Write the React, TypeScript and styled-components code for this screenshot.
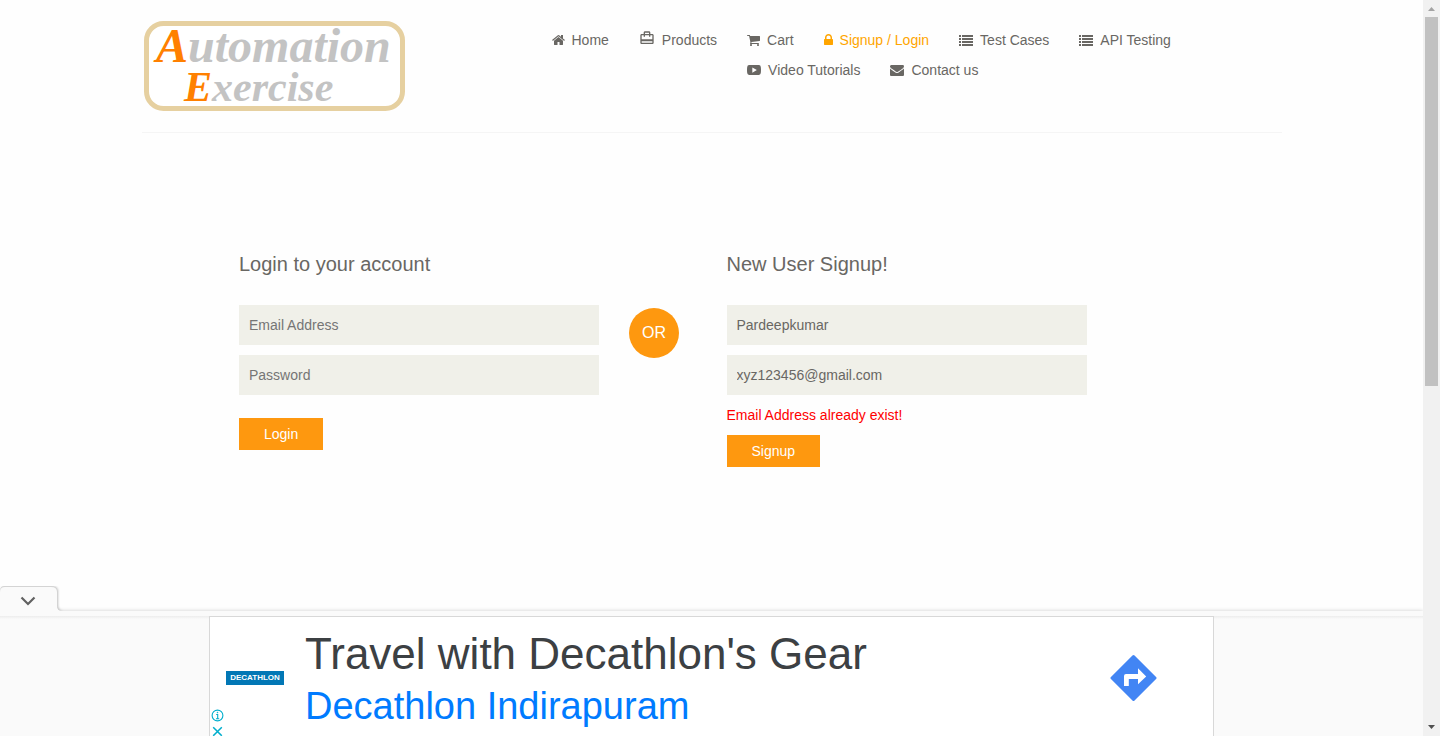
import React, { useState } from "react";
import styled, { createGlobalStyle } from "styled-components";
import { MdCardTravel } from "react-icons/md";

const GlobalStyle = createGlobalStyle`
  *, *::before, *::after { box-sizing: border-box; }
  body {
    margin: 0;
    background: #fefefe;
    color: #696763;
    font: 14px/20px "Liberation Sans", Arial, sans-serif;
  }
`;

const Viewport = styled.div`
  display: flex;
  height: 100vh;
  overflow: hidden;
`;

const Page = styled.div`
  flex: 1;
  min-width: 0;
  display: flex;
  flex-direction: column;
  overflow: hidden;
`;

const Content = styled.div`
  flex: 1;
  min-height: 0;
  overflow: hidden;
`;

const Container = styled.div`
  max-width: 1170px;
  margin: 0 auto;
  padding: 0 15px;
`;

/* Header */

const HeaderRow = styled.header`
  display: flex;
  align-items: flex-start;
  padding: 20px 0;
  border-bottom: 1px solid #f5f5f5;
`;

const LogoLink = styled.a`
  flex: 0 0 410px;
  display: flex;
`;

const Nav = styled.nav`
  flex: 1;
  display: flex;
  gap: 30px;
  padding-top: 10px;
`;

const NavList = styled.ul<{ $wrap?: boolean }>`
  display: flex;
  flex-wrap: ${(p) => (p.$wrap ? "wrap" : "nowrap")};
  align-content: flex-start;
  gap: 10px 30px;
  margin: 0;
  padding: 0;
  list-style: none;
`;

const NavLink = styled.a<{ $active?: boolean }>`
  display: flex;
  align-items: center;
  gap: 7px;
  color: ${(p) => (p.$active ? "orange" : "#696763")};
  text-decoration: none;
  white-space: nowrap;

  svg { display: block; flex: none; }
`;

const RaisedIcon = styled.span`
  padding-bottom: 4px;
`;

/* Forms */

const FormGrid = styled.main`
  display: grid;
  grid-template-columns: repeat(12, 1fr);
  margin: 0 -15px;
  padding-top: 120px;
`;

const Column = styled.section<{ $start: number; $span: number }>`
  grid-column: ${(p) => p.$start} / span ${(p) => p.$span};
  padding: 0 15px;
`;

const Title = styled.h2`
  margin: 0 0 30px;
  font-size: 20px;
  line-height: 22px;
  font-weight: 400;
`;

const Field = styled.input`
  display: block;
  width: 100%;
  height: 40px;
  margin-bottom: 10px;
  padding: 0 10px;
  border: 0;
  border-radius: 0;
  outline: none;
  background: #f0f0e9;
  color: #696763;
  font: inherit;

  &::placeholder { color: #757575; opacity: 1; }
`;

const ErrorText = styled.p`
  margin: 0 0 10px;
  color: #ff0000;
`;

const SubmitButton = styled.button<{ $spaced?: boolean }>`
  display: block;
  height: 32px;
  margin-top: ${(p) => (p.$spaced ? "23px" : "0")};
  padding: 0 25px;
  border: 0;
  background: #fe980f;
  color: #fff;
  font: inherit;
  cursor: pointer;
`;

const OrBadge = styled.h2`
  width: 50px;
  height: 50px;
  margin: 55px 0 0;
  border-radius: 50%;
  background: #fe980f;
  color: #fff;
  font-size: 16px;
  line-height: 50px;
  font-weight: 400;
  text-align: center;
`;

/* Anchored advertisement */

const AdPanel = styled.aside`
  flex: none;
  position: relative;
  padding-top: 5px;
  background: #fafafa;
  box-shadow: 0 0 4px rgba(0, 0, 0, 0.2);
`;

const CollapseButton = styled.button`
  position: absolute;
  left: 0;
  bottom: 100%;
  padding: 0;
  border: 0;
  background: none;
  overflow: hidden;
  cursor: pointer;

  svg {
    display: block;
    filter: drop-shadow(1px 0 1px rgba(0, 0, 0, 0.25));
  }
`;

const AdStage = styled.div`
  height: 120px;
  padding: 0 208px;
  overflow: hidden;
  background: linear-gradient(#ececec, #fafafa 3px);
`;

const AdCard = styled.div`
  position: relative;
  display: flex;
  align-items: center;
  max-width: 1005px;
  height: 124px;
  margin: 0 auto;
  padding: 0 56px 0 16px;
  border: 1px solid #d8d8d8;
  background: #fff;
`;

const BrandMark = styled.span`
  width: 58px;
  height: 14px;
  background: #0277b5;
  color: #fff;
  font: bold 8px/14px "Liberation Sans", Arial, sans-serif;
  text-align: center;
`;

const AdCopy = styled.div`
  flex: 1;
  padding: 4px 0 0 21px;
  white-space: nowrap;
`;

const AdHeadline = styled.div`
  color: #3c4043;
  font-size: 44px;
  line-height: 52px;
`;

const AdLink = styled.a`
  display: block;
  color: #007bff;
  font-size: 38px;
  line-height: 52px;
  text-decoration: none;
`;

const AdDirections = styled.a`
  display: flex;
  color: #4285f4;
`;

const AdControls = styled.div`
  position: absolute;
  left: 1px;
  top: 92px;
  display: flex;
  flex-direction: column;
  gap: 3px;

  button {
    display: block;
    padding: 0;
    border: 0;
    background: none;
    cursor: pointer;
  }

  svg { display: block; }
`;

/* Scrollbar */

const ScrollTrack = styled.div`
  flex: 0 0 17px;
  display: flex;
  flex-direction: column;
  padding: 0 2px;
  background: #f1f1f1;
`;

const ScrollArrow = styled.svg`
  flex: none;
  display: block;
  width: 13px;
  height: 17px;
`;

const ScrollThumb = styled.div`
  flex: 369;
  background: #c1c1c1;
`;

const ScrollRest = styled.div`
  flex: 333;
`;

type GlyphProps = { left: number; width: number; d: string };

/* Icons on a 1792-unit em square, cropped to their own advance width. */
const Glyph = ({ left, width, d }: GlyphProps) => (
  <svg
    width={width}
    height="14"
    viewBox={`${left} 0 ${width * 128} 1792`}
    fill="currentColor"
    fillRule="evenodd"
    aria-hidden="true"
  >
    <path d={d} />
  </svg>
);

const HomeIcon = () => (
  <Glyph
    left={64}
    width={13}
    d="M1472 992v480q0 26-19 45t-45 19h-384v-384h-256v384h-384q-26 0-45-19t-19-45v-480q0-1 .5-3t.5-3l575-474 575 474q1 2 1 6zm223-69l-62 74q-8 9-21 11h-3q-13 0-21-7l-692-577-692 577q-12 8-24 7-13-2-21-11l-62-74q-8-10-7-23.5t11-21.5l719-599q32-26 76-26t76 26l244 204v-195q0-14 9-23t23-9h192q14 0 23 9t9 23v408l219 182q10 8 11 21.5t-7 23.5z"
  />
);

const CartIcon = () => (
  <Glyph
    left={64}
    width={13}
    d="M704 1536q0 52-38 90t-90 38-90-38-38-90 38-90 90-38 90 38 38 90zm896 0q0 52-38 90t-90 38-90-38-38-90 38-90 90-38 90 38 38 90zm128-1088v512q0 24-16.5 42.5t-40.5 21.5l-1044 122q13 60 13 70 0 16-24 64h920q26 0 45 19t19 45-19 45-45 19h-1024q-26 0-45-19t-19-45q0-11 8-31.5t16-36 21.5-40 15.5-29.5l-177-823h-204q-26 0-45-19t-19-45 19-45 45-19h256q16 0 28.5 6.5t19.5 15.5 13 24.5 8 26 5.5 29.5 4.5 26h1201q26 0 45 19t19 45z"
  />
);

const LockIcon = () => (
  <Glyph
    left={320}
    width={9}
    d="M640 768h512v-192q0-106-75-181t-181-75-181 75-75 181v192zm832 96v576q0 40-28 68t-68 28h-960q-40 0-68-28t-28-68v-576q0-40 28-68t68-28h32v-192q0-184 132-316t316-132 316 132 132 316v192h32q40 0 68 28t28 68z"
  />
);

const ListIcon = () => (
  <Glyph
    left={0}
    width={14}
    d="M0 256h256v256H0zM384 256h1408v256H384zM0 640h256v256H0zM384 640h1408v256H384zM0 1024h256v256H0zM384 1024h1408v256H384zM0 1408h256v256H0zM384 1408h1408v256H384z"
  />
);

const VideoIcon = () => (
  <Glyph
    left={0}
    width={14}
    d="M260 270Q896 226 1532 270Q1740 290 1766 500Q1818 896 1766 1292Q1740 1502 1532 1522Q896 1566 260 1522Q52 1502 26 1292Q-26 896 26 500Q52 290 260 270zM680 560V1240L1260 900z"
  />
);

const EnvelopeIcon = () => (
  <Glyph
    left={0}
    width={14}
    d="M1792 710v794q0 66-47 113t-113 47h-1472q-66 0-113-47t-47-113v-794q44 49 101 87 362 246 497 345 57 42 92.5 65.5t94.5 48 110 24.5h2q51 0 110-24.5t94.5-48 92.5-65.5q170-123 498-345 57-39 100-87zm0-294q0 79-49 151t-122 123q-376 261-468 325-10 7-42.5 31t-54 38-52 32.5-57.5 27-50 9h-2q-23 0-50-9t-57.5-27-52-32.5-54-38-42.5-31q-91-64-262-182.5t-205-142.5q-62-42-117-115.5t-55-136.5q0-78 41.5-130t118.5-52h1472q65 0 112.5 47t47.5 113z"
  />
);

const DirectionsIcon = () => (
  <svg width="48" height="48" viewBox="0 0 48 48" aria-hidden="true">
    <path
      d="M24.500 2.500L46 24L24.500 45.500L3 24Z"
      fill="currentColor"
      stroke="currentColor"
      strokeWidth="3"
      strokeLinejoin="round"
    />
    <path d="M15 32V22Q15 20 17 20H29V14.300L37.200 22.400L29 30.200V25H19.800V32Z" fill="#fff" />
  </svg>
);

const Logo = () => (
  <svg width="264" height="92" viewBox="0 0 264 92" role="img" aria-label="Automation Exercise">
    <rect x="4.500" y="3.500" width="256" height="85" rx="17" fill="#fff" stroke="#e6d0a0" strokeWidth="5" />
    <g fontFamily="Liberation Serif, Times New Roman, serif" fontStyle="italic" fontWeight="700" fill="#c3c3c3">
      <text x="14" y="42" fontSize="48">
        <tspan fill="#ff8000">A</tspan>utomation
      </text>
      <text x="42" y="81" fontSize="42">
        <tspan fill="#ff8000">E</tspan>xercise
      </text>
    </g>
  </svg>
);

type LinkItem = { label: string; icon: React.ReactNode; active?: boolean };

const primaryLinks: LinkItem[] = [
  { label: "Home", icon: <HomeIcon /> },
  {
    label: "Products",
    icon: (
      <RaisedIcon>
        <MdCardTravel size={16} />
      </RaisedIcon>
    ),
  },
];

const secondaryLinks: LinkItem[] = [
  { label: "Cart", icon: <CartIcon /> },
  { label: "Signup / Login", icon: <LockIcon />, active: true },
  { label: "Test Cases", icon: <ListIcon /> },
  { label: "API Testing", icon: <ListIcon /> },
  { label: "Video Tutorials", icon: <VideoIcon /> },
  { label: "Contact us", icon: <EnvelopeIcon /> },
];

const Links = ({ items, wrap }: { items: LinkItem[]; wrap?: boolean }) => (
  <NavList $wrap={wrap}>
    {items.map(({ label, icon, active }) => (
      <li key={label}>
        <NavLink href="#" $active={active}>
          {icon}
          {label}
        </NavLink>
      </li>
    ))}
  </NavList>
);

export default function App() {
  const [name, setName] = useState("Pardeepkumar");
  const [email, setEmail] = useState("xyz123456@gmail.com");
  const stay = (e: React.FormEvent) => e.preventDefault();

  return (
    <>
      <GlobalStyle />
      <Viewport>
        <Page>
          <Content>
            <Container>
              <HeaderRow>
                <LogoLink href="#">
                  <Logo />
                </LogoLink>
                <Nav>
                  <Links items={primaryLinks} />
                  <Links items={secondaryLinks} wrap />
                </Nav>
              </HeaderRow>
              <FormGrid>
                <Column $start={2} $span={4}>
                  <Title>Login to your account</Title>
                  <form onSubmit={stay}>
                    <Field type="email" placeholder="Email Address" aria-label="Email Address" />
                    <Field type="password" placeholder="Password" aria-label="Password" />
                    <SubmitButton type="submit" $spaced>Login</SubmitButton>
                  </form>
                </Column>
                <Column $start={6} $span={1}>
                  <OrBadge>OR</OrBadge>
                </Column>
                <Column $start={7} $span={4}>
                  <Title>New User Signup!</Title>
                  <form onSubmit={stay}>
                    <Field type="text" aria-label="Name" value={name} onChange={(e) => setName(e.target.value)} />
                    <Field type="email" aria-label="Email Address" value={email} onChange={(e) => setEmail(e.target.value)} />
                    <ErrorText>Email Address already exist!</ErrorText>
                    <SubmitButton type="submit">Signup</SubmitButton>
                  </form>
                </Column>
              </FormGrid>
            </Container>
          </Content>

          <AdPanel>
            <CollapseButton type="button" aria-label="Collapse advertisement">
              <svg width="64" height="25" viewBox="0 0 64 25">
                <path d="M0 25V5Q0 0 5 0H51Q57 0 57 6V20Q57 25 62 25Z" fill="#d4d4d4" />
                <path d="M0 25V6Q0 1 5 1H51Q57 1 57 6V20Q57 25 62 25Z" fill="#fafafa" />
                <path d="M21.500 11.500L28 18L34.500 11.500" fill="none" stroke="#616161" strokeWidth="2.200" />
              </svg>
            </CollapseButton>
            <AdStage>
              <AdCard>
                <BrandMark>DECATHLON</BrandMark>
                <AdCopy>
                  <AdHeadline>Travel with Decathlon's Gear</AdHeadline>
                  <AdLink href="#">Decathlon Indirapuram</AdLink>
                </AdCopy>
                <AdDirections href="#" aria-label="Directions">
                  <DirectionsIcon />
                </AdDirections>
                <AdControls>
                  <button type="button" aria-label="Ad information">
                    <svg width="13" height="13" viewBox="0 0 13 13" fill="none" stroke="#00aecd">
                      <circle cx="6.500" cy="6.500" r="5.400" strokeWidth="1.100" />
                      <path d="M5.200 5.500H6.700V9.500M5 9.700H8.200" strokeWidth="1.100" />
                      <circle cx="6.500" cy="3.500" r="0.500" fill="#00aecd" strokeWidth="0.500" />
                    </svg>
                  </button>
                  <button type="button" aria-label="Close advertisement">
                    <svg width="13" height="13" viewBox="0 0 13 13" fill="none" stroke="#00aecd">
                      <path d="M2.200 2.200L10.800 10.800M10.800 2.200L2.200 10.800" strokeWidth="1.500" />
                    </svg>
                  </button>
                </AdControls>
              </AdCard>
            </AdStage>
          </AdPanel>
        </Page>

        <ScrollTrack aria-hidden="true">
          <ScrollArrow viewBox="0 0 13 17">
            <path d="M3 11L6.500 7L10 11Z" fill="#a3a3a3" />
          </ScrollArrow>
          <ScrollThumb />
          <ScrollRest />
          <ScrollArrow viewBox="0 0 13 17">
            <path d="M3 6L6.500 10L10 6Z" fill="#505050" />
          </ScrollArrow>
        </ScrollTrack>
      </Viewport>
    </>
  );
}
